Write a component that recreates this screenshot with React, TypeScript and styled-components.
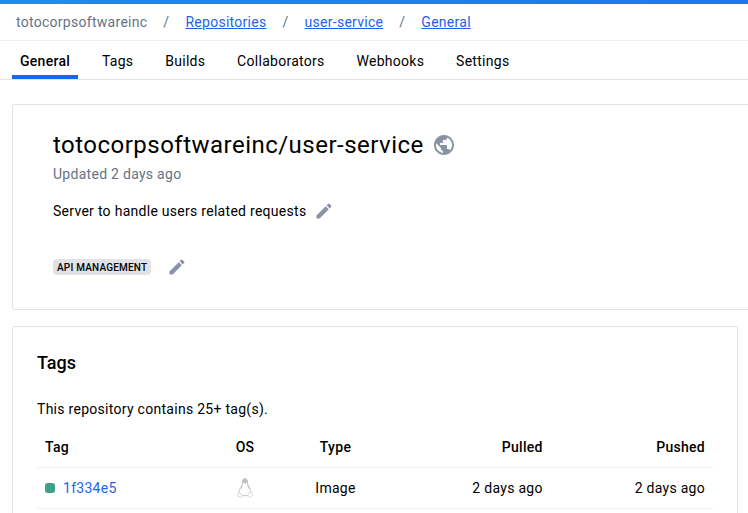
import React from 'react';
import styled, { createGlobalStyle } from 'styled-components';

const Global = createGlobalStyle`
  * { box-sizing: border-box; }
  body { margin: 0; background: #fff; color: #000; overflow: hidden;
    font: 400 14px/20px Roboto, sans-serif; letter-spacing: 0.28px; }
`;
const Page = styled.div`height: 513px; overflow: hidden;`;
const TopBar = styled.div`height: 4px; background: linear-gradient(90deg, #1d8cf0, #1d78ee);`;
const Crumbs = styled.nav`
  display: flex; height: 37px; padding: 0 16px; align-items: center;
  color: #677285; border-bottom: 1px solid #f0f0f2; white-space: pre;
`;
const Slash = styled.span`width: 38px; text-align: center;`;
const Link = styled.a`color: #1d63ed; text-decoration: underline;`;
const Tabs = styled.nav`display: flex; height: 39px; padding-left: 12px; gap: 15.85px; border-bottom: 1px solid #e1e2e6;`;
const Tab = styled.a<{ $active?: boolean }>`
  padding: 10px 8px 0; height: 38px;
  font-weight: ${p => (p.$active ? 500 : 400)};
  border-bottom: ${p => (p.$active ? '4px solid #1d63ed' : '0')};
`;
const Summary = styled.section`
  width: 760px; height: 206px; margin: 24px 0 0 12px; padding: 24px 40px;
  border: 1px solid #e1e2e6; border-radius: 2px;
`;
const TitleRow = styled.div`display: flex; align-items: center; height: 32px; gap: 8px;`;
const Title = styled.h1`margin: 0; font-size: 24px; line-height: 32px; font-weight: 400; letter-spacing: 0.48px;`;
const Updated = styled.div`color: #677285; margin-top: 3px;`;
const Line = styled.div<{ $top: number; $gap: number }>`
  display: flex; align-items: center; height: 20px; margin-top: ${p => p.$top}px; gap: ${p => p.$gap}px;
`;
const Chip = styled.span`
  background: #e1e2e6; border-radius: 4px; height: 16px; padding: 0 4px;
  font-size: 10px; line-height: 17px; font-weight: 500; letter-spacing: 0.2px;
`;
const TagsCard = styled.section`
  width: 726px; height: 220px; margin: 16px 0 0 12px; padding: 24px;
  border: 1px solid #e1e2e6; border-radius: 2px;
`;
const Heading = styled.h2`margin: 0; font-size: 18px; line-height: 24px; font-weight: 500; letter-spacing: 0;`;
const Note = styled.p`margin: 24px 0 0;`;
const Row = styled.div<{ $head?: boolean }>`
  display: grid; grid-template-columns: 180px 40px 141px 1fr 162.3px;
  align-items: center; width: 676px; height: ${p => (p.$head ? 49 : 41)}px; padding: ${p => (p.$head ? '8px' : '0')} 8px 0;
  border-bottom: 1px solid #f0f0f2; font-weight: ${p => (p.$head ? 500 : 400)};
`;
const Cell = styled.div<{ $align?: string }>`
  display: flex; align-items: center; justify-content: ${p => p.$align || 'flex-start'};
`;
const Status = styled.i`width: 10px; height: 10px; border-radius: 3px; background: #3ba08d; margin-right: 8px;`;
const TagLink = styled.a`color: #1d63ed;`;

const Pencil = () => (
  <svg width="20" height="20" viewBox="0 0 24 24" fill="#8993a5">
    <path d="M3 17.25V21h3.75L17.81 9.94l-3.75-3.75L3 17.25zM20.71 7.04a1 1 0 0 0 0-1.41l-2.34-2.34a1 1 0 0 0-1.41 0l-1.83 1.83 3.75 3.75 1.83-1.83z" />
  </svg>
);
const Globe = () => (
  <svg width="24" height="24" viewBox="0 0 24 24" fill="#8993a5">
    <path d="M12 2C6.48 2 2 6.48 2 12s4.48 10 10 10 10-4.48 10-10S17.52 2 12 2zm-1 17.93c-3.95-.49-7-3.85-7-7.93 0-.62.08-1.21.21-1.79L9 15v1c0 1.1.9 2 2 2v1.93zm6.9-2.54c-.26-.81-1-1.39-1.9-1.39h-1v-3c0-.55-.45-1-1-1H8v-2h2c.55 0 1-.45 1-1V7h2c1.1 0 2-.9 2-2v-.41c2.93 1.19 5 4.06 5 7.41 0 2.08-.8 3.97-2.1 5.39z" />
  </svg>
);
const Linux = () => (
  <svg width="18" height="20" viewBox="0 0 18 20" fill="none" stroke="#c4c4c4" strokeWidth="1">
    <path d="M6.5 4C6.300 1.800 7.300.7 9 .7s2.600 1.200 2.500 3.200c0 2.600.6 3.400 1.900 5.400 1.200 2 1.700 4 1 6.400-1.500 2.600-9.200 2.600-10.900 0-.8-2.200 0-4.300 1.400-6.500C6.200 7 6.500 6 6.500 4Z" />
    <path d="M6.500 4C6.300 1.800 7.300.8 9 .8s2.500 1.200 2.400 3.200L9 6Z" fill="#c0c0c0" stroke="none" />
    <path d="M6.500 7 4.600 11M11.600 7l1.800 4" />
    <path d="m3.700 14.500 3.200 4-1.200.8-4.200-1 .4-2.600ZM14.300 14.500l2.300 1.800-.2 1.700-3.600 1.400-.9-1 .5-3.500Z" fill="#fff" stroke="#dcdcdc" />
  </svg>
);

const tabs = ['General', 'Tags', 'Builds', 'Collaborators', 'Webhooks', 'Settings'];

export default function App() {
  return (
    <Page>
      <Global />
      <TopBar />
      <Crumbs>
        <span>totocorpsoftwareinc</span>
        {['Repositories', 'user-service', 'General'].map(name => (
          <React.Fragment key={name}><Slash>/</Slash><Link>{name}</Link></React.Fragment>
        ))}
      </Crumbs>
      <Tabs>{tabs.map((name, i) => <Tab key={name} $active={i === 0}>{name}</Tab>)}</Tabs>
      <Summary>
        <TitleRow><Title>totocorpsoftwareinc/user-service</Title><Globe /></TitleRow>
        <Updated>Updated 2 days ago</Updated>
        <Line $top={17} $gap={8}>Server to handle users related requests<Pencil /></Line>
        <Line $top={36} $gap={16}><Chip>API MANAGEMENT</Chip><Pencil /></Line>
      </Summary>
      <TagsCard>
        <Heading>Tags</Heading>
        <Note>This repository contains 25+ tag(s).</Note>
        <Row $head>
          <Cell>Tag</Cell><Cell $align="center">OS</Cell><Cell $align="center">Type</Cell>
          <Cell $align="flex-end">Pulled</Cell><Cell $align="flex-end">Pushed</Cell>
        </Row>
        <Row>
          <Cell><Status /><TagLink>1f334e5</TagLink></Cell><Cell $align="center"><Linux /></Cell><Cell $align="center">Image</Cell>
          <Cell $align="flex-end">2 days ago</Cell><Cell $align="flex-end">2 days ago</Cell>
        </Row>
      </TagsCard>
    </Page>
  );
}
